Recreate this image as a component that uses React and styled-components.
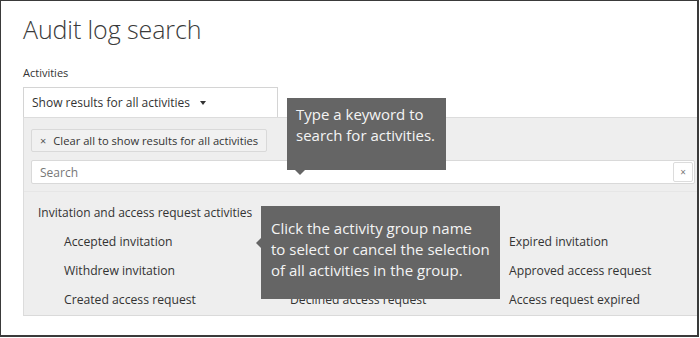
import React from "react";
import styled, { createGlobalStyle } from "styled-components";

const GlobalStyle = createGlobalStyle`
  html, body { margin: 0; padding: 0; background: #ffffff; }
  body { font-family: "Open Sans", "Noto Sans", sans-serif; color: #333333; }
  * { box-sizing: border-box; }
`;

const Frame = styled.div`
  position: relative;
  width: 699px;
  height: 337px;
  border-style: solid;
  border-color: #3a3a3a;
  border-width: 1px 2px 2px 1px;
  background: #ffffff;
  overflow: hidden;
  padding: 0 0 0 22px;
`;

const Title = styled.h1`
  margin: 0;
  padding-top: 12px;
  font-size: 25px;
  line-height: 32px;
  font-weight: 300;
  color: #3a3a3a;
  letter-spacing: -0.1px;
`;

const FieldLabel = styled.div`
  margin-top: 20px;
  font-size: 11px;
  line-height: 16px;
  color: #333333;
`;

const Dropdown = styled.div`
  margin-top: 6px;
  width: 255px;
  height: 30px;
  border: 1px solid #d4d4d4;
  border-bottom: none;
  display: flex;
  align-items: center;
  gap: 10px;
  padding: 0 0 0 8px;
  font-size: 12px;
  color: #333333;
  background: #ffffff;
`;

const Caret = styled.span`
  width: 0;
  height: 0;
  border-left: 3.5px solid transparent;
  border-right: 3.5px solid transparent;
  border-top: 4px solid #333333;
  margin-top: 1px;
`;

const Panel = styled.div`
  background: #eeeeee;
  border-left: 1px solid #dcdcdc;
  border-top: 1px solid #dcdcdc;
  border-bottom: 1px solid #dadada;
  margin-right: -20px;
  padding: 10px 22px 0 7px;
  height: 199px;
`;

const ClearAll = styled.button`
  display: inline-flex;
  align-items: center;
  gap: 7px;
  height: 23px;
  width: 236px;
  padding: 0 0 0 8px;
  background: #f1f1f1;
  border: 1px solid #d9d9d9;
  border-radius: 2px;
  font-family: inherit;
  font-size: 11.2px;
  color: #333333;
  cursor: pointer;
`;

const ClearX = styled.span`
  font-size: 11px;
  color: #555555;
`;

const SearchBox = styled.div`
  margin-top: 8px;
  height: 24px;
  background: #ffffff;
  border: 1px solid #d9d9d9;
  border-radius: 2px;
  display: flex;
  align-items: center;
  padding-left: 6px;
  padding-right: 1px;
`;

const SearchInput = styled.input`
  flex: 1;
  border: none;
  outline: none;
  background: transparent;
  font-family: inherit;
  font-size: 12px;
  color: #333333;
  &::placeholder { color: #777777; }
`;

const ClearSearch = styled.span`
  width: 20px;
  height: 20px;
  border: 1px solid #dcdcdc;
  border-radius: 2px;
  display: flex;
  align-items: center;
  justify-content: center;
  font-size: 10px;
  color: #777777;
`;

const Separator = styled.div`
  margin: 7px -22px 0 -7px;
  border-top: 1px solid #e6e6e6;
`;

const GroupName = styled.div`
  margin-top: 12px;
  padding-left: 7px;
  font-size: 12px;
  line-height: 17px;
  color: #333333;
`;

const ItemGrid = styled.div`
  display: grid;
  grid-template-columns: 226px 219px 1fr;
  grid-auto-rows: 29px;
  padding-left: 33px;
  margin-top: 12px;
`;

const Item = styled.div`
  font-size: 12.2px;
  line-height: 17px;
  color: #333333;
`;

const Tip = styled.div`
  position: absolute;
  background: #656565;
  color: #f4f4f4;
  font-size: 15px;
  line-height: 21px;
  padding: ${(p) => p.$pad};
  left: ${(p) => p.$x}px;
  top: ${(p) => p.$y}px;
  width: ${(p) => p.$w}px;
  height: ${(p) => p.$h}px;
  &::after {
    content: "";
    position: absolute;
    width: 0;
    height: 0;
  }
`;

const TipDown = styled(Tip)`
  &::after {
    left: 8px;
    bottom: -5px;
    border-left: 5px solid transparent;
    border-right: 5px solid transparent;
    border-top: 5px solid #656565;
  }
`;

const TipLeft = styled(Tip)`
  &::after {
    left: -5px;
    top: 32px;
    border-top: 5px solid transparent;
    border-bottom: 5px solid transparent;
    border-right: 5px solid #656565;
  }
`;

const col1 = ["Accepted invitation", "Withdrew invitation", "Created access request"];
const col2 = ["", "", "Declined access request"];
const col3 = ["Expired invitation", "Approved access request", "Access request expired"];

export default function App() {
  const rows = [0, 1, 2];
  return (
    <>
      <GlobalStyle />
      <Frame>
        <Title>Audit log search</Title>
        <FieldLabel>Activities</FieldLabel>
        <Dropdown>
          <span>Show results for all activities</span>
          <Caret />
        </Dropdown>
        <Panel>
          <ClearAll>
            <ClearX>×</ClearX>
            <span>Clear all to show results for all activities</span>
          </ClearAll>
          <SearchBox>
            <SearchInput placeholder="Search" />
            <ClearSearch>×</ClearSearch>
          </SearchBox>
          <Separator />
          <GroupName>Invitation and access request activities</GroupName>
          <ItemGrid>
            {rows.map((r) => (
              <React.Fragment key={r}>
                <Item>{col1[r]}</Item>
                <Item>{col2[r]}</Item>
                <Item>{col3[r]}</Item>
              </React.Fragment>
            ))}
          </ItemGrid>
        </Panel>
        <TipDown $x={286} $y={97} $w={159} $h={72} $pad="6px 0 0 9px">
          Type a keyword to
          <br />
          search for activities.
        </TipDown>
        <TipLeft $x={260} $y={205} $w={239} $h={93} $pad="12px 0 0 10px">
          Click the activity group name
          <br />
          to select or cancel the selection
          <br />
          of all activities in the group.
        </TipLeft>
      </Frame>
    </>
  );
}
